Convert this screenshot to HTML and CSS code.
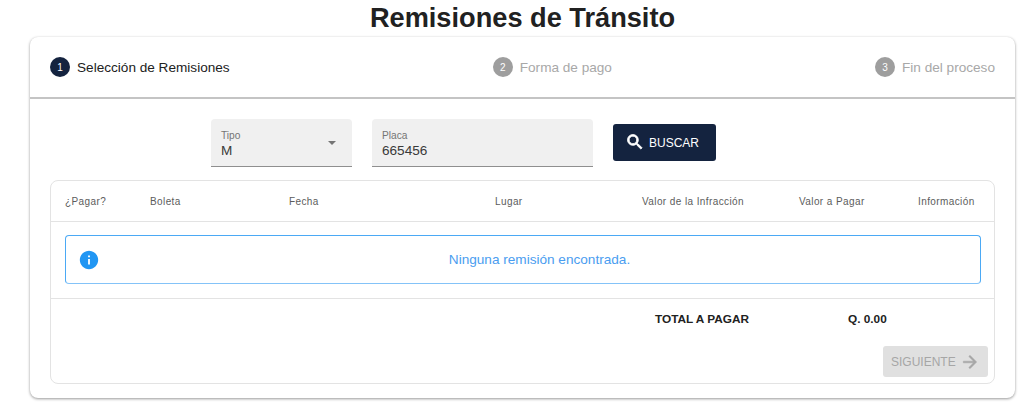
FILE: index.html
```html
<!DOCTYPE html>
<html lang="es">
<head>
<meta charset="utf-8">
<title>Remisiones de Tránsito</title>
<link rel="stylesheet" href="styles.css">
</head>
<body>
<h1 class="title">Remisiones de Tránsito</h1>
<main class="card">
  <div class="stepper">
    <div class="step active"><span class="dot">1</span><span>Selección de Remisiones</span></div>
    <div class="step"><span class="dot">2</span><span>Forma de pago</span></div>
    <div class="step"><span class="dot">3</span><span>Fin del proceso</span></div>
  </div>
  <div class="content">
    <form class="filters">
      <div class="field field-type">
        <label class="field-label">Tipo</label>
        <div class="field-value">M</div>
        <span class="caret"></span>
      </div>
      <div class="field field-plate">
        <label class="field-label">Placa</label>
        <div class="field-value">665456</div>
      </div>
      <button class="search" type="button">
        <svg class="search-icon" viewBox="0 0 24 24" width="20" height="20"><path fill="#fff" stroke="#fff" stroke-width="1" d="M15.5 14h-.79l-.28-.27A6.47 6.47 0 0 0 16 9.5 6.5 6.5 0 1 0 9.5 16c1.61 0 3.09-.59 4.23-1.57l.27.28v.79l5 4.99L20.49 19l-4.99-5zm-6 0C7.01 14 5 11.99 5 9.5S7.01 5 9.5 5 14 7.01 14 9.5 11.99 14 9.5 14z"/></svg>
        <span class="search-text">BUSCAR</span>
      </button>
    </form>
    <section class="panel">
      <div class="thead">
        <span>¿Pagar?</span>
        <span>Boleta</span>
        <span>Fecha</span>
        <span>Lugar</span>
        <span>Valor de la Infracción</span>
        <span>Valor a Pagar</span>
        <span>Información</span>
      </div>
      <div class="alert-row">
        <div class="alert">
          <svg class="alert-icon" viewBox="0 0 24 24" width="22" height="22"><path fill="#2196f3" d="M12 2C6.48 2 2 6.48 2 12s4.48 10 10 10 10-4.48 10-10S17.52 2 12 2zm1 15h-2v-6h2v6zm0-8h-2V7h2v2z"/></svg>
          <span class="alert-text">Ninguna remisión encontrada.</span>
        </div>
      </div>
      <div class="total">
        <span class="total-label">TOTAL A PAGAR</span>
        <span class="total-value">Q. 0.00</span>
      </div>
      <div class="actions">
        <button class="next" type="button" disabled>
          <span>SIGUIENTE</span>
          <svg viewBox="0 0 24 24" width="20" height="20"><path fill="#a6a6a6" stroke="#a6a6a6" stroke-width=".6" d="M12 4l-1.41 1.41L16.17 11H4v2h12.17l-5.58 5.59L12 20l8-8z"/></svg>
        </button>
      </div>
    </section>
  </div>
</main>
</body>
</html>
```

FILE: styles.css
```css
* { box-sizing: border-box; }
html, body { margin: 0; padding: 0; }
body {
  width: 1024px;
  height: 410px;
  overflow: hidden;
  background: #fff;
  font-family: "Liberation Sans", Arial, sans-serif;
  color: #212121;
}
.title {
  margin: 0 0 0 30px;
  width: 985px;
  height: 37px;
  font-size: 27.2px;
  line-height: 35px;
  font-weight: 700;
  text-align: center;
  color: #212121;
}
.card {
  width: 985px;
  height: 361px;
  margin-left: 30px;
  background: #fff;
  border-radius: 8px;
  box-shadow: 0 1px 3px rgba(0,0,0,.4), 0 0 1px rgba(0,0,0,.06);
}
.stepper {
  height: 62px;
  padding: 0 20px;
  display: flex;
  justify-content: space-between;
  align-items: center;
  border-bottom: 2px solid #c4c4c4;
}
.step {
  display: flex;
  align-items: center;
  gap: 7px;
  font-size: 13.6px;
  color: #a8a8a8;
}
.step.active { color: #212121; }
.dot {
  width: 20px;
  height: 20px;
  border-radius: 50%;
  background: #9e9e9e;
  color: #fff;
  font-size: 10px;
  display: flex;
  align-items: center;
  justify-content: center;
}
.active .dot { background: #14233f; }
.content { padding: 19px 20px 0; }
.filters {
  display: flex;
  align-items: center;
  height: 49px;
  padding-left: 161px;
}
.field {
  position: relative;
  height: 48px;
  padding: 11px 10px 0;
  background: #f0f0f0;
  border-bottom: 1px solid #8f8f8f;
  border-radius: 4px 4px 0 0;
}
.field-type { width: 141px; margin-right: 20px; }
.field-plate { width: 221px; margin-right: 20px; }
.field-label {
  display: block;
  font-size: 10.2px;
  line-height: 12px;
  color: #757575;
}
.field-value {
  font-size: 13.6px;
  line-height: 18px;
  color: #3a3a3a;
}
.caret {
  position: absolute;
  right: 16px;
  top: 22px;
  border-left: 4px solid transparent;
  border-right: 4px solid transparent;
  border-top: 4px solid #757575;
}
.search {
  width: 103px;
  height: 37px;
  padding: 0 0 0 12px;
  margin-top: -1px;
  display: flex;
  align-items: center;
  gap: 4px;
  border: 0;
  border-radius: 3px;
  background: #14233f;
  color: #fff;
  font: 400 12px "Liberation Sans", Arial, sans-serif;
}
.search-text { padding-top: 2px; }
.panel {
  height: 204px;
  margin-top: 13px;
  border: 1px solid #e3e3e3;
  border-radius: 8px;
}
.thead {
  height: 41px;
  border-bottom: 1px solid #e3e3e3;
  font-size: 10px;
  letter-spacing: .4px;
  color: #5c5c5c;
  display: grid;
  grid-template-columns: 85px 139px 206px 147px 157px 119px 1fr;
  align-items: center;
  padding-left: 14px;
}
.alert-row {
  height: 77px;
  padding: 13px 13px 0 14px;
  border-bottom: 1px solid #e3e3e3;
}
.alert {
  height: 49px;
  padding: 0 1px 0 12px;
  border: 1px solid #4ba9f5;
  border-bottom-color: #84c3f8;
  border-radius: 4px;
  display: flex;
  align-items: center;
}
.alert-text {
  flex: 1;
  text-align: center;
  font-size: 13.6px;
  color: #4a9df0;
}
.total {
  height: 41px;
  padding-bottom: 2px;
  display: flex;
  align-items: center;
  font-size: 11.8px;
  font-weight: 700;
  color: #212121;
}
.total-label { margin-left: 604px; width: 193px; }
.actions {
  display: flex;
  justify-content: flex-end;
  padding: 6px 6px 0 0;
}
.next {
  width: 105px;
  height: 31px;
  padding: 0 0 0 8px;
  display: flex;
  align-items: center;
  gap: 4px;
  border: 0;
  border-radius: 3px;
  background: #e0e0e0;
  color: #a6a6a6;
  font: 400 12px "Liberation Sans", Arial, sans-serif;
}
```
